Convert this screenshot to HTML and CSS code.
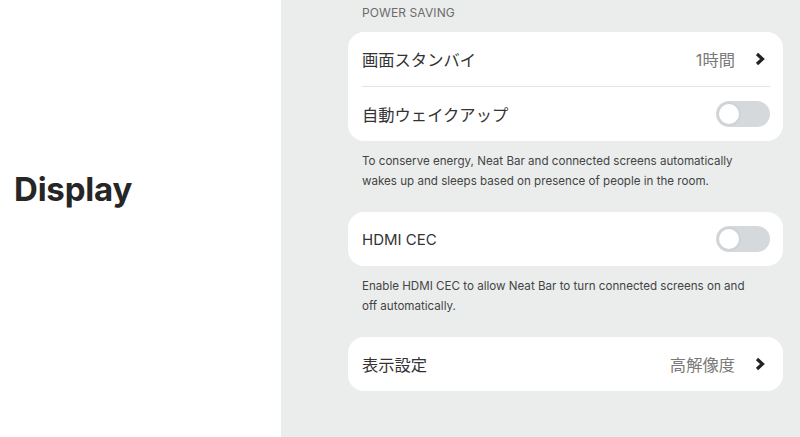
FILE: index.html
```html
<!DOCTYPE html>
<html>
<head>
    <title>Display</title>
    <link rel="stylesheet" href="styles.css">
</head>
<body>
    <div class="page">
        <div class="side">
            <h1>Display</h1>
        </div>
        <div class="main">
            <div class="section-title">POWER SAVING</div>
            <div class="card">
                <div class="row">
                    <span class="label">画面スタンバイ</span>
                    <span class="value">1時間</span>
                    <svg class="chevron" width="12" height="14" viewBox="0 0 12 14"><path d="M3 2 L8.5 7 L3 12" fill="none" stroke="#222" stroke-width="3.2" stroke-linejoin="miter"/></svg>
                </div>
                <div class="divider"></div>
                <div class="row">
                    <span class="label">自動ウェイクアップ</span>
                    <span class="toggle"><span class="knob"></span></span>
                </div>
            </div>
            <p class="caption">To conserve energy, Neat Bar and connected screens automatically wakes up and sleeps based on presence of people in the room.</p>

            <div class="card">
                <div class="row">
                    <span class="label latin">HDMI CEC</span>
                    <span class="toggle"><span class="knob"></span></span>
                </div>
            </div>
            <p class="caption">Enable HDMI CEC to allow Neat Bar to turn connected screens on and off automatically.</p>

            <div class="card">
                <div class="row">
                    <span class="label">表示設定</span>
                    <span class="value">高解像度</span>
                    <svg class="chevron" width="12" height="14" viewBox="0 0 12 14"><path d="M3 2 L8.5 7 L3 12" fill="none" stroke="#222" stroke-width="3.2" stroke-linejoin="miter"/></svg>
                </div>
            </div>
        </div>
    </div>
</body>
</html>
```
FILE: styles.css
```css
body {
    margin: 0;
    font-family: "Inter", "Noto Sans CJK JP", sans-serif;
    color: #333333;
    background-color: #FFFFFF;
}
.page {
    display: flex;
    height: 437px;
    overflow: hidden;
}
.side {
    width: 281px;
    flex-shrink: 0;
    padding: 169px 0 0 14px;
    box-sizing: border-box;
}
.side h1 {
    margin: 0;
    font-size: 33px;
    font-weight: 700;
    color: #262626;
    letter-spacing: -0.2px;
}
.main {
    flex: 1;
    background-color: #EBEDED;
    padding: 5px 17px 0 67px;
}
.section-title {
    font-size: 12px;
    color: #6b6b6b;
    padding-left: 14px;
    height: 27px;
    letter-spacing: 0.1px;
}
.card {
    background-color: #FFFFFF;
    border-radius: 16px;
    padding: 0 13px 0 14px;
}
.row {
    display: flex;
    align-items: center;
    height: 54px;
    font-size: 16.3px;
}
.label {
    flex: 1;
    color: #333333;
}
.label.latin {
    font-size: 15px;
}
.value {
    color: #7a7a7a;
    margin-right: 19px;
}
.chevron {
    margin-right: 4px;
}
.divider {
    height: 1px;
    background-color: #E3E5E5;
}
.toggle {
    width: 54px;
    height: 26px;
    border-radius: 13px;
    background-color: #D6D9DB;
    position: relative;
}
.knob {
    position: absolute;
    left: 1px;
    top: 1px;
    width: 20px;
    height: 20px;
    border-radius: 50%;
    background-color: #FFFFFF;
    border: 2px solid #D0D3D5;
}
.caption {
    margin: 10px 0 21px 14px;
    font-size: 11.6px;
    line-height: 20px;
    color: #444444;
    padding-right: 36px;
}
```
